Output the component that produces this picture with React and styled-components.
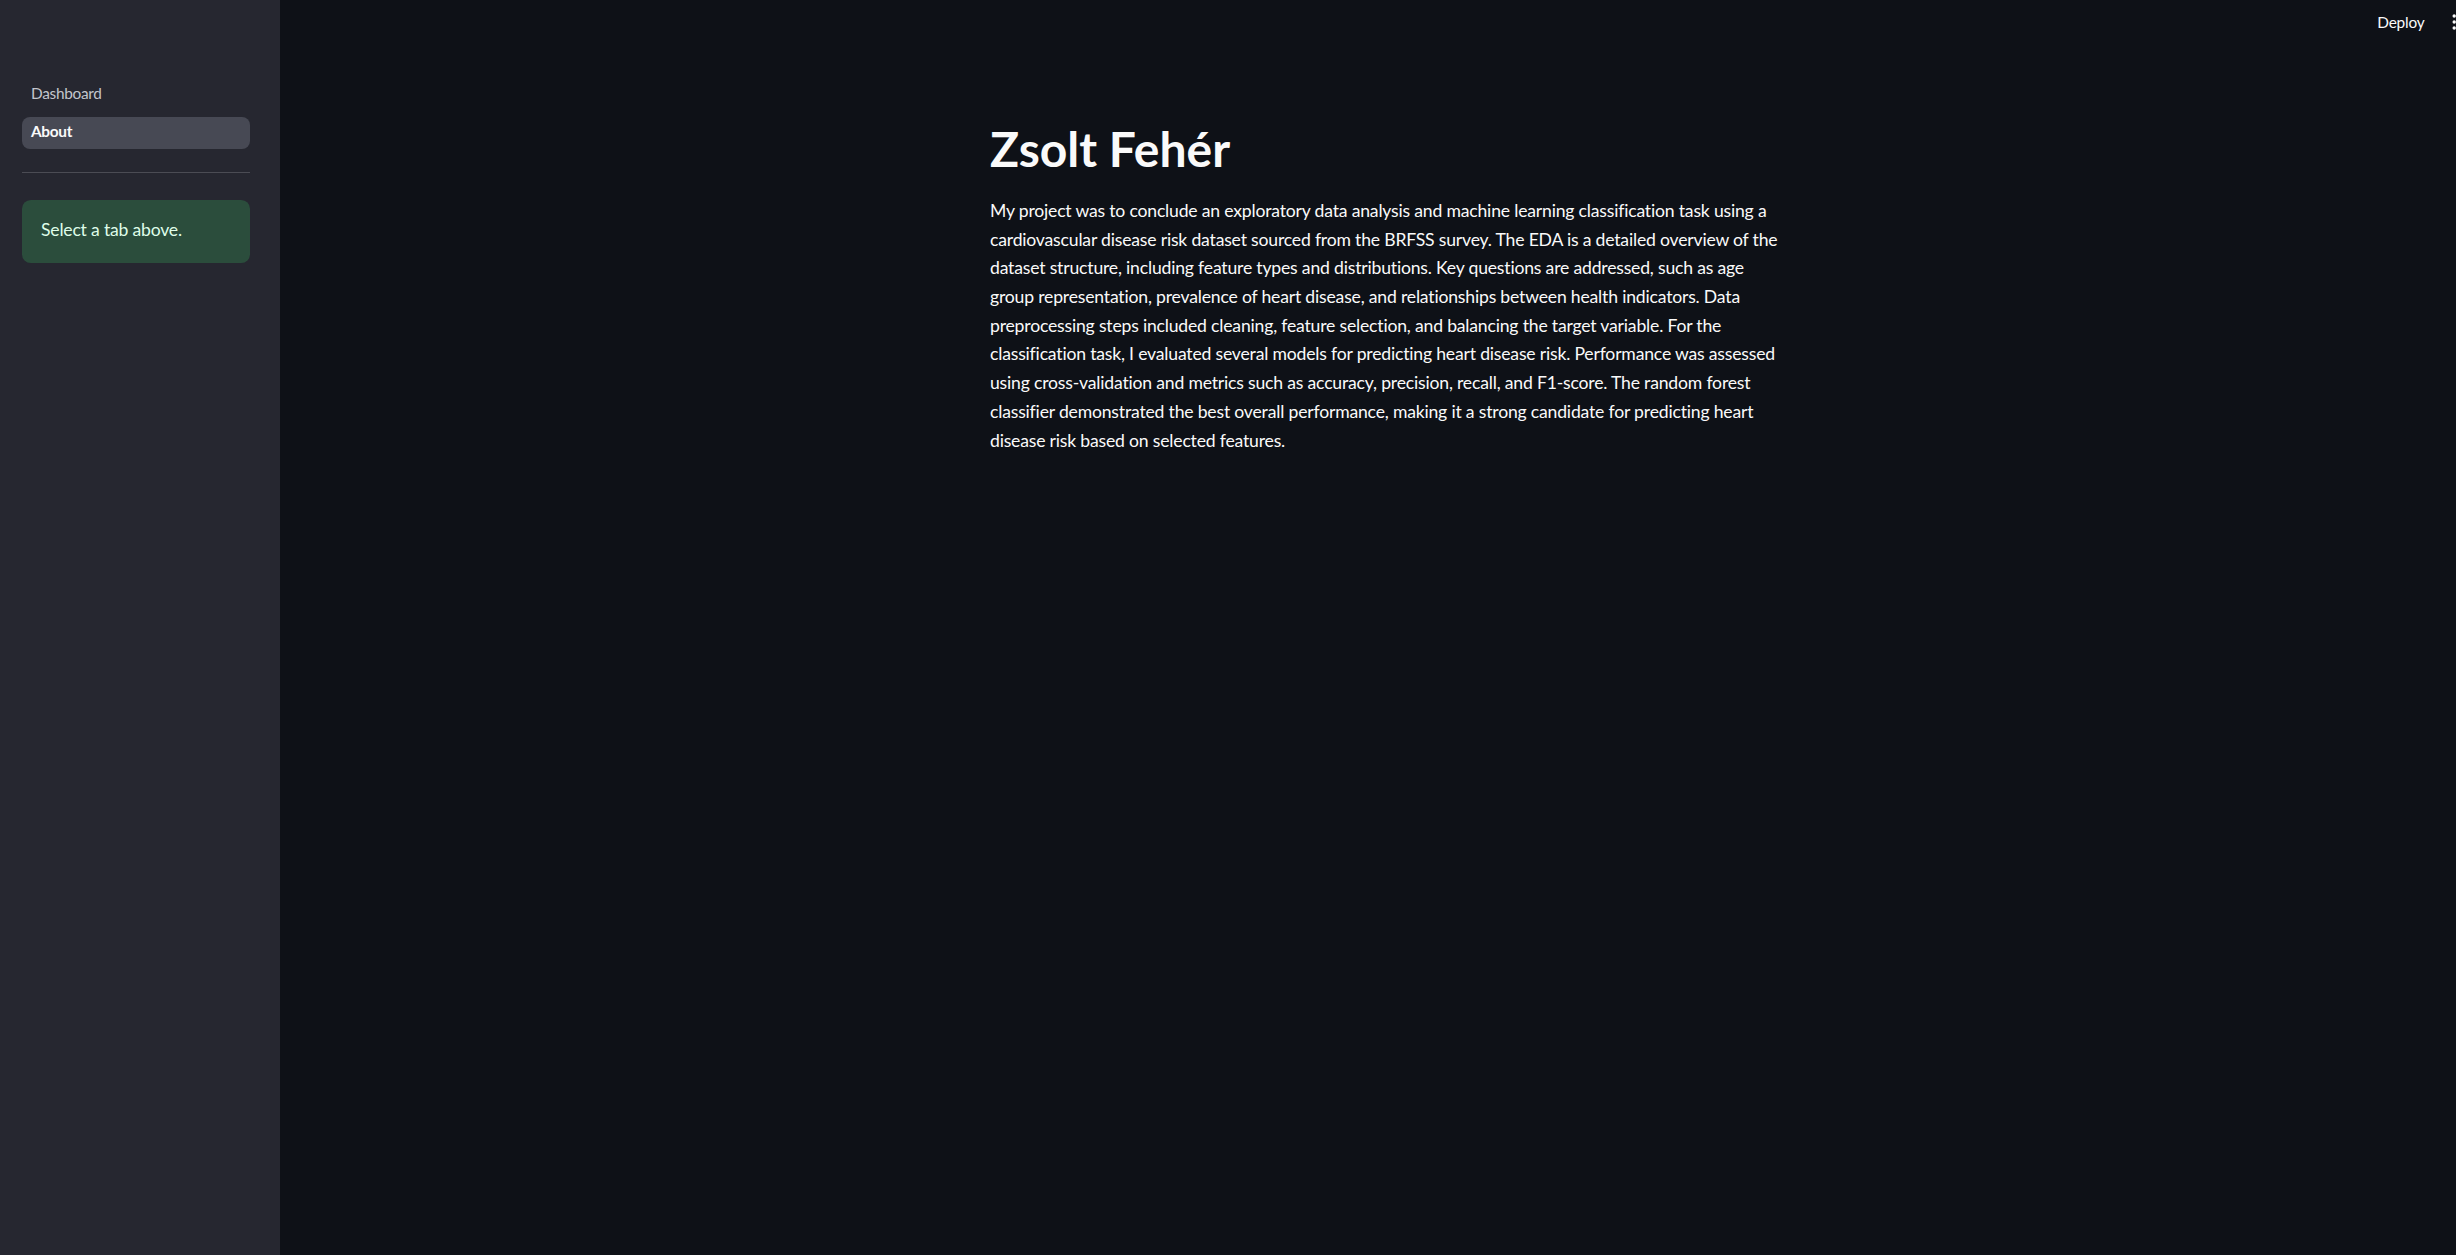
import React from "react";
import styled, { createGlobalStyle } from "styled-components";

const GlobalStyle = createGlobalStyle`
  html, body { margin: 0; padding: 0; background: #0e1117; overflow: hidden; }
  body { font-family: Lato, "Noto Sans", sans-serif; color: #fafafa; }
  * { box-sizing: border-box; }
`;

const Shell = styled.div`
  display: grid;
  grid-template-columns: 280px 1fr;
  width: 100vw;
  height: 100vh;
  overflow: hidden;
`;

const Sidebar = styled.aside`
  background: #262730;
  padding: 78.5px 30px 0 22px;
  display: flex;
  flex-direction: column;
`;

const Nav = styled.nav`
  display: flex;
  flex-direction: column;
  gap: 6px;
`;

const NavItem = styled.a`
  display: flex;
  align-items: center;
  height: 32px;
  padding: 0 9px 4px;
  border-radius: 8px;
  font-size: 15.4px;
  letter-spacing: -0.3px;
  text-decoration: none;
  cursor: pointer;
  color: ${(p) => (p.$active ? "#fafafa" : "#c2c5cc")};
  font-weight: ${(p) => (p.$active ? 700 : 400)};
  background: ${(p) => (p.$active ? "#474954" : "transparent")};
`;

const Divider = styled.hr`
  margin: 23px 0 27px;
  border: none;
  height: 1px;
  background: #4b4c54;
`;

const InfoBox = styled.div`
  background: #2b4d3c;
  border-radius: 8.8px;
  padding: 16.5px 19px 18.5px;
  font-size: 17.6px;
  line-height: 28.16px;
  letter-spacing: -0.2px;
  color: #dffde9;
`;

const Main = styled.main`
  display: flex;
  flex-direction: column;
  min-width: 0;
`;

const Header = styled.header`
  height: 44px;
  display: flex;
  align-items: center;
  justify-content: flex-end;
`;

const DeployButton = styled.span`
  font-size: 15.4px;
  letter-spacing: -0.2px;
  color: #fafafa;
  line-height: 18px;
  cursor: pointer;
`;

const MenuButton = styled.span`
  display: flex;
  margin-left: 27px;
  width: 4.5px;
  height: 16px;
`;

const ContentWrap = styled.div`
  display: flex;
  justify-content: center;
  padding: 76px 0 0 38px;
`;

const Content = styled.section`
  width: 794px;
`;

const Title = styled.h1`
  margin: 0;
  font-size: 48px;
  font-weight: 700;
  line-height: 1.2;
  letter-spacing: 0;
  color: #fafafa;
`;

const Paragraph = styled.p`
  margin: 19.3px 0 0;
  font-size: 17.6px;
  line-height: 28.7px;
  letter-spacing: -0.19px;
  color: #fafafa;
`;

const DotsIcon = () => (
  <svg width="4.5" height="16" viewBox="0 0 4.5 16" fill="#fafafa">
    <circle cx="2.2" cy="2" r="1.7" />
    <circle cx="2.2" cy="8" r="1.7" />
    <circle cx="2.2" cy="14" r="1.7" />
  </svg>
);

export default function App() {
  return (
    <>
      <GlobalStyle />
      <Shell>
        <Sidebar>
          <Nav>
            <NavItem>Dashboard</NavItem>
            <NavItem $active>About</NavItem>
          </Nav>
          <Divider />
          <InfoBox>Select a tab above.</InfoBox>
        </Sidebar>
        <Main>
          <Header>
            <DeployButton>Deploy</DeployButton>
            <MenuButton>
              <DotsIcon />
            </MenuButton>
          </Header>
          <ContentWrap>
            <Content>
              <Title>Zsolt Fehér</Title>
              <Paragraph>
                My project was to conclude an exploratory data analysis and machine learning classification task using a
                cardiovascular disease risk dataset sourced from the BRFSS survey. The EDA is a detailed overview of the
                dataset structure, including feature types and distributions. Key questions are addressed, such as age
                group representation, prevalence of heart disease, and relationships between health indicators. Data
                preprocessing steps included cleaning, feature selection, and balancing the target variable. For the
                classification task, I evaluated several models for predicting heart disease risk. Performance was assessed
                using cross-validation and metrics such as accuracy, precision, recall, and F1-score. The random forest
                classifier demonstrated the best overall performance, making it a strong candidate for predicting heart
                disease risk based on selected features.
              </Paragraph>
            </Content>
          </ContentWrap>
        </Main>
      </Shell>
    </>
  );
}
